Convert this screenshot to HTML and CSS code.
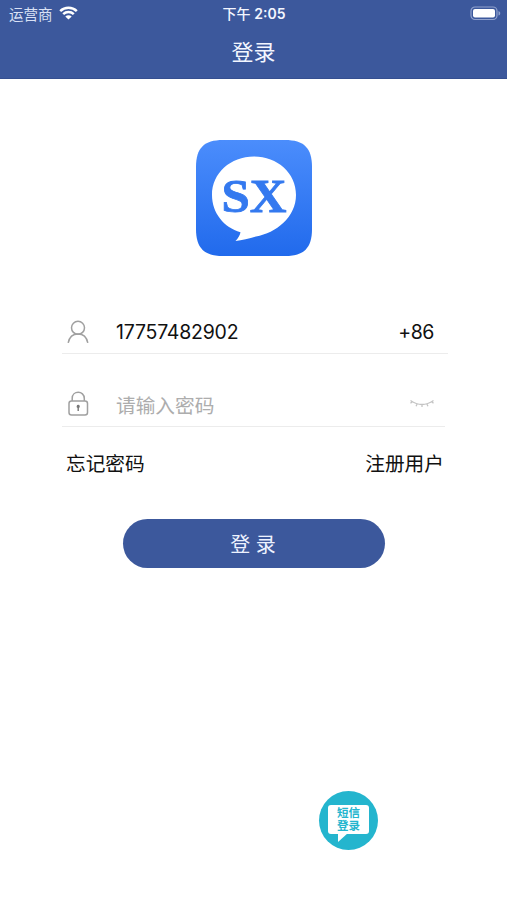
FILE: index.html
```html
<!DOCTYPE html>
<html lang="zh-CN">
<head>
    <meta charset="UTF-8">
    <meta name="viewport" content="width=device-width, initial-scale=1.0">
    <title>登录</title>
    <link rel="stylesheet" href="styles.css">
</head>
<body>
    <header class="header">
        <div class="status-bar">
            <div class="carrier">
                <span>运营商</span>
                <svg class="wifi" width="19" height="14" viewBox="0 0 19 14">
                    <path d="M1.2 5.1C5.8 .6 13.2 .6 17.8 5.1M4.2 8.2c3-2.8 7.6-2.8 10.6 0" fill="none" stroke="#fff" stroke-width="2.5"/>
                    <path d="M6.3 10.4c1.8-1.7 4.6-1.7 6.4 0L9.5 13.6z" fill="#fff"/>
                </svg>
            </div>
            <div class="time">下午 <span>2:05</span></div>
            <svg class="battery" width="31" height="15" viewBox="0 0 31 15">
                <rect x="1" y="1" width="26" height="12.5" rx="4" fill="none" stroke="#91a2ce" stroke-width="1.2"/>
                <rect x="3" y="3" width="22" height="8.6" rx="2" fill="#fff"/>
                <path d="M28.5 5c2.3.9 2.3 3.7 0 4.6z" fill="#91a2ce"/>
            </svg>
        </div>
        <h1>登录</h1>
    </header>

    <main class="container">
        <svg class="logo" width="116" height="116" viewBox="0 0 116 116">
            <defs>
                <linearGradient id="logoBg" x1="0" y1="0" x2="0" y2="1">
                    <stop offset="0" stop-color="#4b8dfc"/>
                    <stop offset="1" stop-color="#216aec"/>
                </linearGradient>
            </defs>
            <path d="M27 0H89C108 0 116 8 116 27V89C116 108 108 116 89 116H27C8 116 0 108 0 89V27C0 8 8 0 27 0Z" fill="url(#logoBg)"/>
            <path d="M58 16.5C81.500 16.500 100 33 100 55C100 77 80 93 60 96.500C53 98.500 46 100.500 39.500 101C42 98.500 44 95.500 44.500 92.300C28 87.500 16 73 16 55C16 33 34.500 16.500 58 16.500Z" fill="#fff"/>
            <text class="logo-text" x="25.500" y="71.500" textLength="65" lengthAdjust="spacingAndGlyphs">SX</text>
        </svg>

        <form class="login-form">
            <div class="form-row">
                <svg class="icon" width="24" height="26" viewBox="0 0 24 26">
                    <circle cx="12" cy="8.800" r="6.500"/>
                    <path d="M2.200 23.800C3.200 18.800 6.500 15 12 15S20.800 18.800 21.800 23.800"/>
                </svg>
                <span class="phone">17757482902</span>
                <span class="code">+86</span>
            </div>
            <div class="form-row password">
                <svg class="icon" width="24" height="26" viewBox="0 0 24 26">
                    <rect x="3" y="10" width="18.500" height="14" rx="2.500"/>
                    <path d="M6.200 10V7.500C6.200 -.8 18.300 -.8 18.300 7.500V10"/>
                    <path class="keyhole" d="M12.200 13.800a1.700 1.700 0 0 1 .7 3.200V20h-1.400v-3A1.700 1.700 0 0 1 12.200 13.800z"/>
                </svg>
                <span class="placeholder">请输入密码</span>
                <svg class="eye" width="26" height="10" viewBox="0 0 26 10">
                    <path d="M1.500 1.500Q13 9.500 24.500 1.500M3.300 2.700L1.500 4.300M8 5l-.9 2.200M13 5.700V8M18 5l.9 2.200M22.700 2.700L24.500 4.300"/>
                </svg>
            </div>
            <div class="links">
                <a>忘记密码</a>
                <a>注册用户</a>
            </div>
            <button type="button" class="login-button">登 录</button>
        </form>

        <div class="sms-login">
            <div class="sms-bubble">短信<br>登录</div>
        </div>
    </main>
</body>
</html>
```
FILE: styles.css
```css
* {
    box-sizing: border-box;
}
body {
    margin: 0;
    height: 900px;
    overflow: hidden;
    background-color: #fff;
    font-family: Inter, "Noto Sans CJK SC", sans-serif;
    color: #111;
}
.header {
    height: 79px;
    background-color: #3c589c;
    border-bottom: 1px solid #354f90;
    color: #f3f6ff;
}
.status-bar {
    display: grid;
    grid-template-columns: 1fr auto 1fr;
    align-items: center;
    height: 26px;
    padding: 0 6px 0 9px;
    font-size: 14.5px;
}
.carrier {
    display: flex;
    align-items: center;
    gap: 6px;
    color: #d9e1f5;
}
.wifi {
    margin-top: -1px;
}
.time {
    padding-right: 2px;
    font-size: 14px;
    font-weight: 500;
}
.time span {
    font-weight: 600;
}
.battery {
    justify-self: end;
    margin-top: 1px;
}
h1 {
    margin: 0;
    font-size: 22px;
    font-weight: 400;
    line-height: 53px;
    text-align: center;
}
.container {
    display: flex;
    flex-direction: column;
    padding: 61px 59px 0 62px;
}
.logo {
    margin-left: 134px;
}
.logo-text {
    font-family: "Liberation Serif", serif;
    font-size: 47px;
    font-weight: bold;
    fill: #3479ef;
    stroke: #3479ef;
    stroke-width: 0.8;
}
.login-form {
    margin-top: 54px;
}
.form-row {
    display: flex;
    align-items: center;
    height: 44px;
    border-bottom: 1px solid #ececec;
    font-size: 19.5px;
}
.form-row.password {
    margin: 29px 3px 0 0;
    padding-bottom: 1px;
}
.icon {
    margin: 0 26px 0 4px;
    fill: none;
    stroke: #a0a0a0;
    stroke-width: 1.5;
}
.icon .keyhole {
    fill: #777;
    stroke: none;
}
.phone {
    letter-spacing: -0.22px;
}
.code {
    margin: 0 14px 0 auto;
    letter-spacing: -0.4px;
}
.placeholder {
    color: #adadad;
    font-size: 19.7px;
}
.eye {
    margin: 0 10px 0 auto;
    fill: none;
    stroke: #c4c4c4;
    stroke-width: 1.3;
}
.links {
    display: flex;
    justify-content: space-between;
    margin: 22px 4px 0 4px;
    font-size: 19.7px;
    line-height: 30px;
}
.login-button {
    display: block;
    width: 262px;
    height: 49px;
    margin: 40px 0 0 61px;
    padding: 0 2px 0 0;
    border: 0;
    border-radius: 25px;
    background-color: #3c589c;
    color: #edf2ff;
    font-family: inherit;
    font-size: 20px;
}
.sms-login {
    display: flex;
    justify-content: center;
    width: 59px;
    height: 59px;
    margin: 223px 0 0 257px;
    padding-top: 14px;
    border-radius: 50%;
    background-color: #24b5ce;
}
.sms-bubble {
    position: relative;
    width: 41px;
    height: 29px;
    padding-top: 2px;
    border-radius: 3px;
    background-color: #fff;
    color: #24b5ce;
    font-size: 11.5px;
    font-weight: 700;
    line-height: 12.5px;
    text-align: center;
}
.sms-bubble::after {
    content: "";
    position: absolute;
    left: 10px;
    top: 28px;
    border-top: 9px solid #fff;
    border-right: 10px solid transparent;
}
```
